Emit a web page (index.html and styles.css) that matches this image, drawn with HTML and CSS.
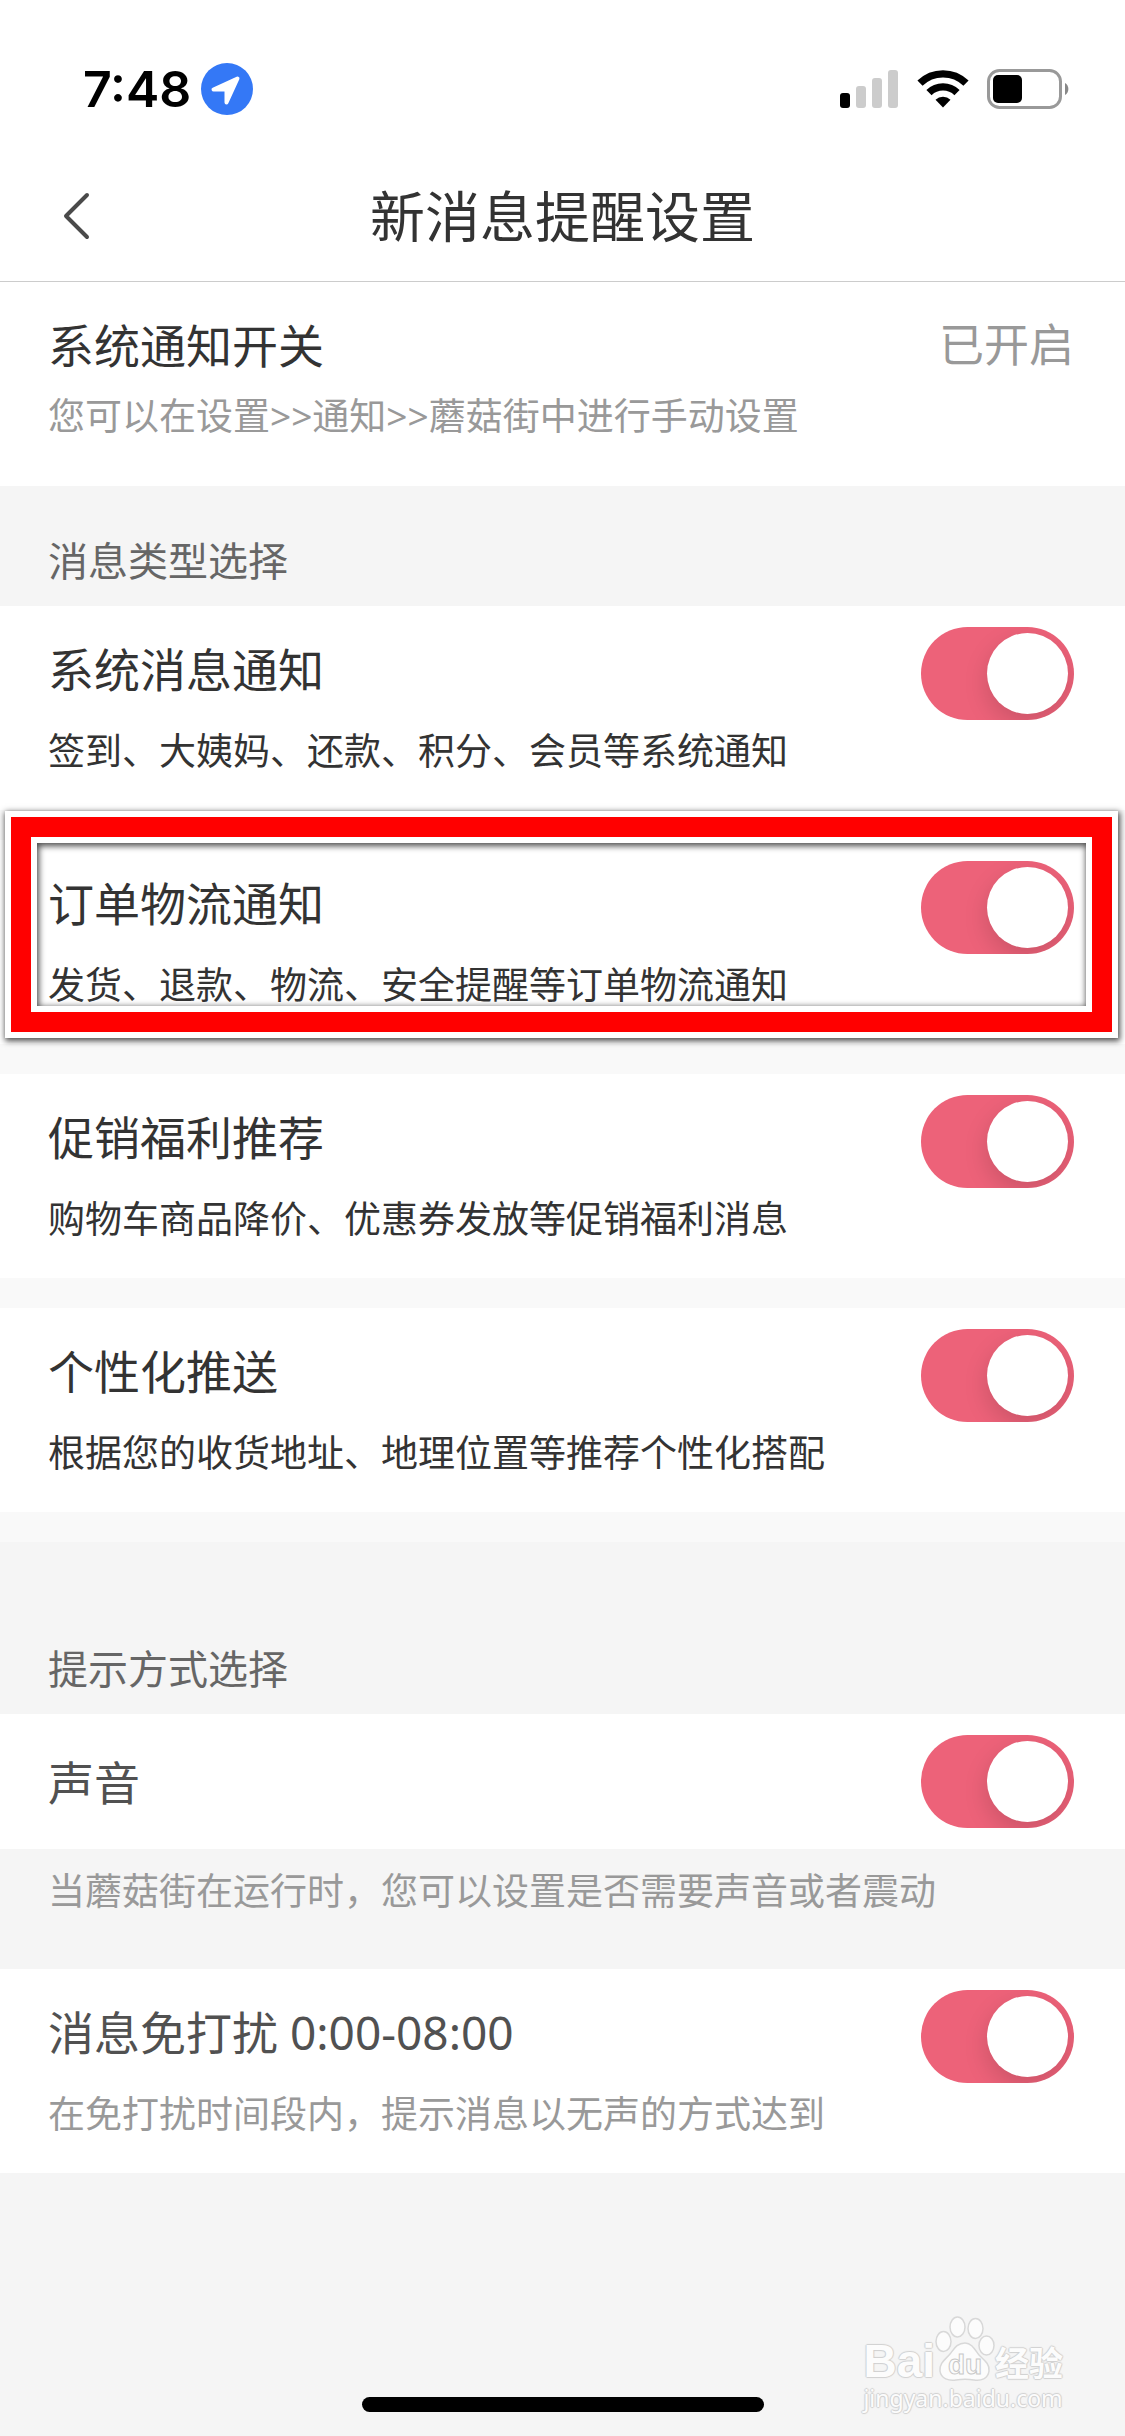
FILE: index.html
```html
<!DOCTYPE html>
<html lang="zh-CN">
<head>
    <meta charset="UTF-8">
    <meta name="viewport" content="width=device-width, initial-scale=1.0">
    <title>新消息提醒设置</title>
    <link rel="stylesheet" href="styles.css">
</head>
<body>
    <div class="status-bar">
        <span class="time">7:48</span>
        <svg class="location" width="52" height="52" viewBox="0 0 52 52">
            <circle cx="26" cy="26" r="26" fill="#3478f6"/>
            <path d="M36.500 15.500 L12.500 26.500 H25.500 V39.500 Z" fill="#fff" stroke="#fff" stroke-width="4" stroke-linejoin="round"/>
        </svg>
        <div class="status-icons">
            <svg width="58" height="38" viewBox="0 0 58 38">
                <rect x="0" y="23" width="10" height="15" rx="3" fill="#000"/>
                <rect x="16" y="16" width="10" height="22" rx="3" fill="#ccc"/>
                <rect x="32" y="8" width="10" height="30" rx="3" fill="#ccc"/>
                <rect x="48" y="0" width="10" height="38" rx="3" fill="#ccc"/>
            </svg>
            <svg width="53" height="38" viewBox="-1 0 53 38">
                <path d="M3 13.200 A33 33 0 0 1 49 13.200" fill="none" stroke="#000" stroke-width="7.400"/>
                <path d="M12 22.600 A20 20 0 0 1 40 22.600" fill="none" stroke="#000" stroke-width="7.400"/>
                <path d="M18.500 29.800 A11 11 0 0 1 33.500 29.800 L26 37.500 Z" fill="#000"/>
            </svg>
            <svg width="82" height="40" viewBox="0 0 82 40">
                <rect x="1.500" y="1.500" width="72" height="37" rx="11" fill="none" stroke="#999" stroke-width="3"/>
                <rect x="6" y="6" width="29" height="28" rx="5" fill="#000"/>
                <path d="M78 14 a7 7 0 0 1 0 12 Z" fill="#888"/>
            </svg>
        </div>
    </div>

    <header class="header">
        <button class="back" type="button" aria-label="返回">
            <svg width="30" height="50" viewBox="0 0 30 50">
                <path d="M26 4 L5 25 L26 46" fill="none" stroke="#4a4a4a" stroke-width="4" stroke-linecap="round" stroke-linejoin="round"/>
            </svg>
        </button>
        <h1>新消息提醒设置</h1>
    </header>

    <main>
        <section class="row system">
            <div class="text">
                <h2>系统通知开关</h2>
                <p>您可以在设置&gt;&gt;通知&gt;&gt;蘑菇街中进行手动设置</p>
            </div>
            <span class="state">已开启</span>
        </section>

        <h3 class="group-title">消息类型选择</h3>
        <div class="type-list">
            <div class="row">
                <label class="text" for="systemMsg">
                    <span class="title">系统消息通知</span>
                    <span class="desc">签到、大姨妈、还款、积分、会员等系统通知</span>
                </label>
                <input class="switch" type="checkbox" id="systemMsg" checked>
            </div>
            <div class="row marked">
                <label class="text" for="orderMsg">
                    <span class="title">订单物流通知</span>
                    <span class="desc">发货、退款、物流、安全提醒等订单物流通知</span>
                </label>
                <input class="switch" type="checkbox" id="orderMsg" checked>
            </div>
            <div class="row">
                <label class="text" for="promoMsg">
                    <span class="title">促销福利推荐</span>
                    <span class="desc">购物车商品降价、优惠券发放等促销福利消息</span>
                </label>
                <input class="switch" type="checkbox" id="promoMsg" checked>
            </div>
            <div class="row">
                <label class="text" for="personalMsg">
                    <span class="title">个性化推送</span>
                    <span class="desc">根据您的收货地址、地理位置等推荐个性化搭配</span>
                </label>
                <input class="switch" type="checkbox" id="personalMsg" checked>
            </div>
        </div>

        <h3 class="group-title spaced">提示方式选择</h3>
        <div class="row light single">
            <label class="text" for="sound">
                <span class="title">声音</span>
            </label>
            <input class="switch" type="checkbox" id="sound" checked>
        </div>
        <p class="note">当蘑菇街在运行时，您可以设置是否需要声音或者震动</p>
        <div class="row light">
            <label class="text" for="quiet">
                <span class="title">消息免打扰 0:00-08:00</span>
                <span class="desc">在免打扰时间段内，提示消息以无声的方式达到</span>
            </label>
            <input class="switch" type="checkbox" id="quiet" checked>
        </div>
    </main>

    <footer class="footer">
        <div class="home-indicator"></div>
        <div class="watermark">
            <div class="brand">
                <span class="brand-bai">Bai</span>
                <svg width="60" height="66" viewBox="0 0 60 66">
                    <g fill="#fcfcfc" stroke="#d8d8d8" stroke-width="1.500">
                        <ellipse cx="8.500" cy="25.500" rx="7.500" ry="10"/>
                        <ellipse cx="22.500" cy="11" rx="7.500" ry="10"/>
                        <ellipse cx="40.500" cy="12.500" rx="7.500" ry="10"/>
                        <ellipse cx="51.500" cy="29.500" rx="7.500" ry="9.500"/>
                        <path d="M30 27 C37 27 40 34 44 39 C49 44 55 48 54 55 C53 63 46 65 39 64 C32 63 28 63 21 64 C14 65 6 63 5 55 C4 47 11 43 15 38 C19 33 22 27 30 27 Z"/>
                    </g>
                    <text class="brand-du" x="30" y="58" text-anchor="middle">du</text>
                </svg>
                <span class="brand-cn">经验</span>
            </div>
            <div class="brand-url">jingyan.baidu.com</div>
        </div>
    </footer>
</body>
</html>
```
FILE: styles.css
```css
* {
    box-sizing: border-box;
}
body {
    margin: 0;
    min-height: 100vh;
    display: flex;
    flex-direction: column;
    background: #f5f5f5;
    color: #333;
    font-family: "Noto Sans", "Noto Sans CJK SC", sans-serif;
}
h1, h2, h3, p {
    margin: 0;
    font-weight: 400;
}

/* 状态栏 */
.status-bar {
    display: flex;
    align-items: center;
    padding: 63px 56px 0 83px;
    background: #fff;
}
.time {
    font-family: Inter, sans-serif;
    font-size: 50px;
    line-height: 52px;
    font-weight: 600;
    color: #000;
}
.location {
    margin-left: 10px;
}
.status-icons {
    display: flex;
    align-items: center;
    gap: 18px;
    margin-left: auto;
}

/* 标题栏 */
.header {
    display: grid;
    grid-template-columns: 100px 1fr 100px;
    align-items: center;
    padding: 65px 0 30px;
    background: #fff;
    border-bottom: 1px solid #ccc;
}
.header h1 {
    font-size: 55px;
    line-height: 71px;
    text-align: center;
}
.back {
    display: flex;
    padding: 0 0 0 61px;
    border: none;
    background: none;
    cursor: pointer;
}

/* 设置行 */
.row {
    position: relative;
    display: flex;
    align-items: flex-start;
    justify-content: space-between;
    min-height: 204px;
    padding: 21px 51px 21px 48px;
    background: #fff;
}
.row.single {
    align-items: center;
    min-height: 135px;
}
.text {
    padding-top: 10px;
}
.single .text {
    padding-top: 0;
}
.title,
.row h2,
.state {
    display: block;
    font-size: 46px;
    line-height: 64px;
}
.desc,
.row p {
    display: block;
    margin-top: 24px;
    font-size: 37px;
    line-height: 52px;
}
.row p {
    margin-top: 13px;
    color: #999;
}
.state {
    padding-top: 10px;
    font-size: 45px;
    color: #999;
}
.light .title {
    color: #515151;
}
.light .desc {
    color: #999;
}
.type-list {
    display: flex;
    flex-direction: column;
    gap: 30px;
    padding-bottom: 30px;
    background: #f9f9f9;
}
.group-title {
    padding: 47px 48px 17px;
    font-size: 40px;
    line-height: 56px;
    color: #666;
}
.group-title.spaced {
    padding-top: 99px;
}
.note {
    padding: 16px 48px 52px;
    font-size: 37px;
    line-height: 52px;
    color: #999;
}

/* 开关 */
.switch {
    appearance: none;
    flex: none;
    display: flex;
    align-items: center;
    width: 153px;
    height: 93px;
    margin: 0;
    padding: 6px;
    border-radius: 47px;
    background: #dcdcdc;
    overflow: hidden;
    cursor: pointer;
}
.switch::before {
    content: "";
    width: 81px;
    height: 81px;
    border-radius: 50%;
    background: #fff;
    box-shadow: 0 9px 24px rgba(0, 0, 0, 0.15);
}
.switch:checked {
    justify-content: flex-end;
    background: #ed6279;
}

/* 红色标注框 */
.marked::after {
    content: "";
    position: absolute;
    top: -23px;
    right: 13px;
    bottom: 12px;
    left: 11px;
    z-index: 1;
    border: 20px solid #f00;
    box-shadow:
        0 0 0 6px #fff,
        1px 2px 6px 7px rgba(0, 0, 0, 0.7),
        inset 0 0 0 6px #fff,
        inset 1px 2px 6px 7px rgba(0, 0, 0, 0.7);
    pointer-events: none;
}

/* 底部 */
.footer {
    position: relative;
    flex: 1;
    display: flex;
    align-items: flex-end;
    justify-content: center;
    min-height: 200px;
    padding-bottom: 24px;
}
.home-indicator {
    width: 402px;
    height: 15px;
    border-radius: 8px;
    background: #000;
}
.watermark {
    position: absolute;
    right: 62px;
    bottom: 22px;
    color: #fcfcfc;
    text-shadow: 1px 0 1px #d0d0d0, -1px 0 1px #d0d0d0, 0 1px 1px #d0d0d0, 0 -1px 1px #d0d0d0;
}
.brand {
    display: flex;
    align-items: flex-end;
}
.brand-bai {
    font-family: "Liberation Sans", sans-serif;
    font-size: 46px;
    line-height: 42px;
    font-weight: 700;
}
.brand-du {
    font-family: "Liberation Sans", sans-serif;
    font-size: 28px;
    font-weight: 700;
    fill: #fcfcfc;
    stroke: #c8c8c8;
    stroke-width: 1px;
    text-shadow: none;
}
.brand-cn {
    font-family: "Noto Sans CJK SC", sans-serif;
    font-size: 34px;
    line-height: 40px;
    font-weight: 700;
}
.brand-url {
    font-size: 23px;
    line-height: 32px;
}
```
